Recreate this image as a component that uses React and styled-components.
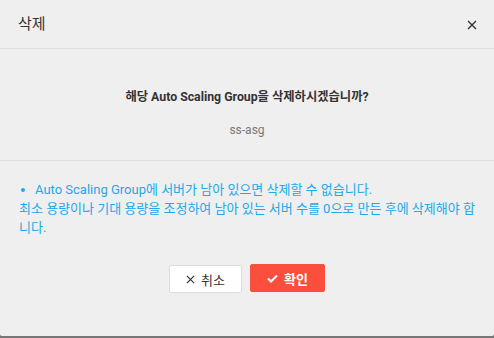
import React from "react";
import styled, { createGlobalStyle } from "styled-components";

const Global = createGlobalStyle`
  html, body { margin: 0; padding: 0; background: #777; }
  body { font-family: Roboto, "Noto Sans CJK KR", sans-serif; }
  * { box-sizing: border-box; }
`;

const Dialog = styled.div`
  width: 494px;
  height: 336px;
  background: #efefef;
  border-radius: 0 0 2px 2px;
  display: flex;
  flex-direction: column;
`;

const Header = styled.div`
  height: 49px;
  display: flex;
  align-items: center;
  justify-content: space-between;
  padding: 0 17px 3px 18px;
  border-bottom: 1px solid #dcdcdc;
`;

const Title = styled.h2`
  margin: 0;
  font-size: 15px;
  font-weight: 400;
  color: #333;
`;

const CloseButton = styled.button`
  border: 0;
  background: none;
  padding: 0;
  margin-top: 5px;
  width: 10px;
  height: 10px;
  display: flex;
  cursor: pointer;
`;

const Confirm = styled.div`
  height: 112px;
  border-bottom: 1px solid #dcdcdc;
  display: flex;
  flex-direction: column;
  align-items: center;
  padding-top: 39px;
  gap: 15px;
`;

const Question = styled.p`
  margin: 0;
  font-size: 12.3px;
  line-height: 18px;
  font-weight: 700;
  color: #333;
`;

const Name = styled.p`
  margin: 0;
  font-size: 12px;
  line-height: 18px;
  color: #777;
`;

const Note = styled.ul`
  margin: 0;
  padding: 19px 19px 0 19px;
  list-style: none;
  color: #22a8ea;
  font-size: 13px;
  line-height: 19px;
`;

const NoteItem = styled.li`
  &::before {
    content: "";
    display: inline-block;
    width: 4px;
    height: 4px;
    border-radius: 50%;
    background: currentColor;
    margin: 0 10px 2px 2px;
    vertical-align: middle;
  }
`;

const Actions = styled.div`
  display: flex;
  justify-content: center;
  gap: 8px;
  margin-top: 27px;
`;

const Button = styled.button`
  height: 28px;
  width: ${(p) => (p.$primary ? "75px" : "73px")};
  border: 1px solid ${(p) => (p.$primary ? "#fa4f3d" : "#dddddd")};
  background: ${(p) => (p.$primary ? "#fa4f3d" : "#ffffff")};
  color: ${(p) => (p.$primary ? "#ffffff" : "#333")};
  font-family: Roboto, "Noto Sans CJK KR", sans-serif;
  font-size: 13px;
  font-weight: ${(p) => (p.$primary ? 700 : 400)};
  border-radius: 2px;
  display: flex;
  align-items: center;
  justify-content: center;
  gap: 6px;
  padding: 0;
  margin-top: ${(p) => (p.$primary ? "0" : "1px")};
`;

const XIcon = ({ size = 10, color = "#333", w = 1.4 }) => (
  <svg width={size} height={size} viewBox="0 0 10 10">
    <path d="M1 1L9 9M9 1L1 9" stroke={color} strokeWidth={w} fill="none" />
  </svg>
);

const CheckIcon = () => (
  <svg width="11" height="9" viewBox="0 0 11 9">
    <path d="M1 4.5L4 7.5L10 1.5" stroke="#fff" strokeWidth="2" fill="none" />
  </svg>
);

export default function App() {
  return (
    <>
      <Global />
      <Dialog>
        <Header>
          <Title>삭제</Title>
          <CloseButton aria-label="close">
            <XIcon size={10} />
          </CloseButton>
        </Header>
        <Confirm>
          <Question>해당 Auto Scaling Group을 삭제하시겠습니까?</Question>
          <Name>ss-asg</Name>
        </Confirm>
        <Note>
          <NoteItem>
            Auto Scaling Group에 서버가 남아 있으면 삭제할 수 없습니다.
            <br />
            최소 용량이나 기대 용량을 조정하여 남아 있는 서버 수를 0으로 만든 후에 삭제해야 합니다.
          </NoteItem>
        </Note>
        <Actions>
          <Button>
            <XIcon size={9} color="#333" w={1.3} />
            취소
          </Button>
          <Button $primary>
            <CheckIcon />
            확인
          </Button>
        </Actions>
      </Dialog>
    </>
  );
}
